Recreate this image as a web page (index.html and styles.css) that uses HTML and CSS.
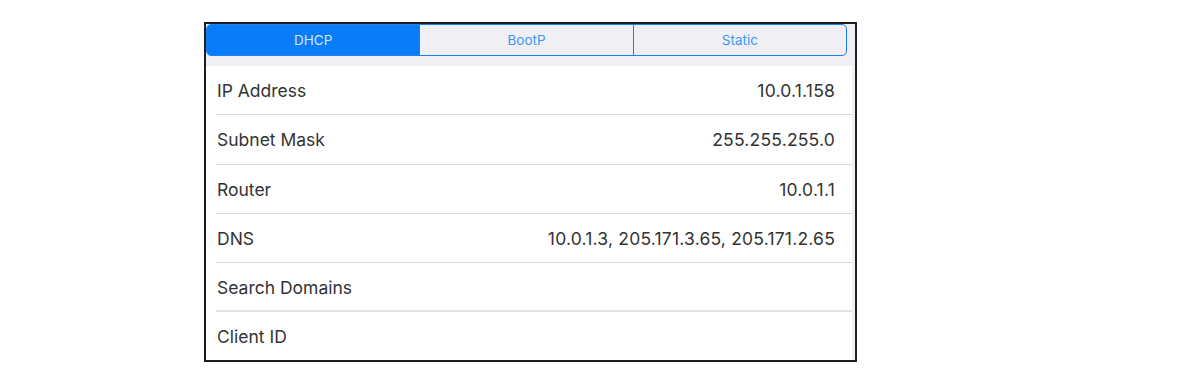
FILE: index.html
```html
<!DOCTYPE html>
<html>
<head>
<meta charset="utf-8">
<link rel="stylesheet" href="styles.css">
</head>
<body>
<div class="frame">
  <div class="seg-bar">
    <div class="seg">
      <div class="seg-item active">DHCP</div>
      <div class="seg-item">BootP</div>
      <div class="seg-item">Static</div>
    </div>
  </div>
  <div class="list">
    <div class="row"><span class="label">IP Address</span><span class="value">10.0.1.158</span></div>
    <div class="row"><span class="label">Subnet Mask</span><span class="value">255.255.255.0</span></div>
    <div class="row"><span class="label">Router</span><span class="value">10.0.1.1</span></div>
    <div class="row"><span class="label">DNS</span><span class="value">10.0.1.3, 205.171.3.65, 205.171.2.65</span></div>
    <div class="row thick"><span class="label">Search Domains</span><span class="value"></span></div>
    <div class="row last"><span class="label">Client ID</span><span class="value"></span></div>
  </div>
</div>
</body>
</html>
```
FILE: styles.css
```css
html, body {
  margin: 0;
  padding: 0;
  background: #ffffff;
}
body {
  font-family: Inter, "Liberation Sans", Arial, sans-serif;
}
.frame {
  margin: 22px 0 0 204px;
  width: 649px;
  height: 336px;
  border: 2px solid #1e1e1e;
  background: #efeff4;
  display: flex;
  flex-direction: column;
}
.seg-bar {
  padding: 0 8px 10px 0;
}
.seg {
  display: flex;
  height: 30px;
  border: 1px solid #1a7ff5;
  border-radius: 5px;
  overflow: hidden;
  background: #efeff4;
}
.seg-item {
  flex: 1;
  display: flex;
  align-items: center;
  justify-content: center;
  font-size: 13.5px;
  color: #3d97f2;
  border-left: 1px solid #1a7ff5;
}
.seg-item:first-child {
  border-left: none;
}
.seg-item.active {
  background: #0a7cf8;
  color: #d5e6fb;
}
.list {
  flex: 1;
  min-height: 0;
  overflow: hidden;
  display: flex;
  flex-direction: column;
  background: #ffffff;
  margin-right: 3px;
  padding-left: 10px;
}
.row {
  box-sizing: border-box;
  height: 49.3px;
  flex: none;
  display: flex;
  align-items: center;
  justify-content: space-between;
  border-bottom: 1px solid #d6d6d8;
  padding: 1px 17px 0 1px;
  font-size: 17.5px;
  color: #333333;
}
.value {
  letter-spacing: 0.2px;
}
.row.thick {
  border-bottom: 2px solid #e4e4e6;
}
.row.last {
  border-bottom: none;
  flex: 1 1 auto;
  height: auto;
  min-height: 0;
}
```
